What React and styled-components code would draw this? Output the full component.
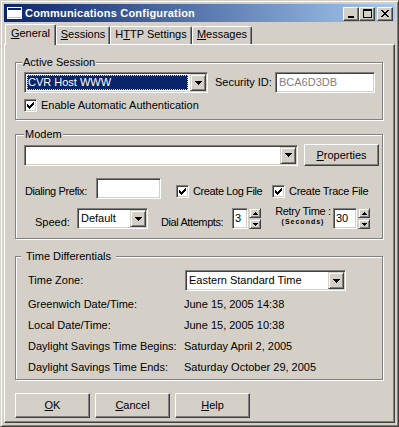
import React from "react";
import styled, { createGlobalStyle } from "styled-components";

const FACE = "#D4D0C8";

const GlobalStyle = createGlobalStyle`
  html, body {
    margin: 0;
    padding: 0;
    background: ${FACE};
  }
  body {
    font-family: "Liberation Sans", Arial, sans-serif;
    font-size: 11px;
    color: #000;
  }
  * {
    box-sizing: border-box;
  }
`;

const Window = styled.div`
  width: 399px;
  height: 427px;
  background: ${FACE};
  border: 1px solid;
  border-color: ${FACE} #404040 #404040 ${FACE};
  box-shadow: inset 1px 1px #fff, inset -1px -1px #808080;
  padding: 3px;
  display: flex;
  flex-direction: column;
`;

const TitleBar = styled.div`
  height: 18px;
  flex: none;
  display: flex;
  align-items: center;
  padding: 0 2px 0 3px;
  background: linear-gradient(to right, #0a246a, #a6caf0);
  color: #fff;
`;

const TitleText = styled.div`
  flex: 1;
  margin-left: 3px;
  font-weight: bold;
  font-size: 11px;
  letter-spacing: 0.2px;
  line-height: 13px;
  padding-top: 1px;
  white-space: nowrap;
`;

const CaptionButtons = styled.div`
  display: flex;
  align-items: center;
  margin-top: 1px;
`;

const CaptionButton = styled.div`
  width: 16px;
  height: 14px;
  margin-left: ${(p) => (p.$gap ? 2 : 0)}px;
  background: ${FACE};
  border: 1px solid;
  border-color: #fff #404040 #404040 #fff;
  box-shadow: inset -1px -1px #808080;
  display: flex;
  align-items: center;
  justify-content: center;
`;

const TabStrip = styled.div`
  height: 21px;
  flex: none;
  margin-top: 1px;
  display: flex;
  align-items: flex-end;
  padding-left: 1px;
  position: relative;
  z-index: 1;
`;

const Tab = styled.div`
  width: ${(p) => p.$w}px;
  height: ${(p) => (p.$active ? 21 : 18)}px;
  margin-bottom: ${(p) => (p.$active ? -1 : 0)}px;
  background: ${FACE};
  border-top: 1px solid #fff;
  border-left: 1px solid #fff;
  border-right: 1px solid #404040;
  border-radius: 2px 2px 0 0;
  box-shadow: inset -1px 0 #808080;
  display: flex;
  justify-content: center;
  padding-top: ${(p) => (p.$active ? 2 : 1)}px;
  line-height: 13px;
  white-space: nowrap;
`;

const Panel = styled.div`
  flex: 1;
  background: ${FACE};
  border: 1px solid;
  border-color: #fff #404040 #404040 #fff;
  box-shadow: inset -1px -1px #808080;
  padding: 17px 0 0 10px;
  display: flex;
  flex-direction: column;
`;

const Group = styled.div`
  position: relative;
  flex: none;
  width: 368px;
  height: ${(p) => p.$h}px;
  margin-top: ${(p) => p.$mt || 0}px;
  border: 1px solid #808080;
  box-shadow: inset 1px 1px #fff, 1px 1px #fff;
  padding: ${(p) => p.$pad};
`;

const Legend = styled.span`
  position: absolute;
  top: -7px;
  left: ${(p) => p.$left}px;
  padding: 0 ${(p) => p.$px}px;
  background: ${FACE};
  line-height: 13px;
  white-space: nowrap;
`;

const Row = styled.div`
  display: flex;
  align-items: ${(p) => p.$align || "center"};
  margin-top: ${(p) => p.$mt || 0}px;
`;

const Sunken = styled.div`
  flex: none;
  width: ${(p) => p.$w}px;
  height: 21px;
  margin-left: ${(p) => p.$ml || 0}px;
  background: #fff;
  border: 1px solid;
  border-color: #808080 #fff #fff #808080;
  box-shadow: inset 1px 1px #404040, inset -1px -1px ${FACE};
  padding: 1px;
  display: flex;
  align-items: center;
  color: ${(p) => (p.$dim ? "#808080" : "#000")};
  line-height: 13px;
  white-space: nowrap;
`;

const FieldText = styled.span`
  padding-left: ${(p) => p.$pl || 2}px;
`;

const ComboValue = styled.div`
  flex: 1;
  height: 15px;
  margin: 0 2px 0 1px;
  padding-left: 1px;
  line-height: 13px;
  background: ${(p) => (p.$selected ? "#0a246a" : "transparent")};
  color: ${(p) => (p.$selected ? "#fff" : "#000")};
  outline: ${(p) => (p.$selected ? "1px dotted #e8d48a" : "none")};
  outline-offset: -1px;
  padding-top: 1px;
`;

const DropButton = styled.div`
  flex: none;
  width: 16px;
  height: 17px;
  background: ${FACE};
  border: 1px solid;
  border-color: ${FACE} #404040 #404040 ${FACE};
  box-shadow: inset 1px 1px #fff, inset -1px -1px #808080;
  display: flex;
  align-items: center;
  justify-content: center;
`;

const Label = styled.span`
  flex: none;
  width: ${(p) => (p.$w ? `${p.$w}px` : "auto")};
  margin-left: ${(p) => p.$ml || 0}px;
  margin-top: ${(p) => p.$mt || 0}px;
  letter-spacing: ${(p) => p.$ls || 0}px;
  line-height: 13px;
  white-space: nowrap;
`;

const CheckLabel = styled.label`
  display: flex;
  align-items: center;
  flex: none;
  width: ${(p) => (p.$w ? `${p.$w}px` : "auto")};
  margin-left: ${(p) => p.$ml || 0}px;
  margin-top: ${(p) => p.$mt || 0}px;
  letter-spacing: ${(p) => p.$ls || 0}px;
  line-height: 13px;
  white-space: nowrap;
  gap: 4px;
`;

const CheckBox = styled.span`
  flex: none;
  width: 13px;
  height: 13px;
  background: #fff;
  border: 1px solid;
  border-color: #808080 #fff #fff #808080;
  box-shadow: inset 1px 1px #404040, inset -1px -1px ${FACE};
  padding: 2px 0 0 2px;
  display: flex;
`;

const PushButton = styled.button`
  flex: none;
  width: ${(p) => p.$w || 75}px;
  height: ${(p) => p.$h || 23}px;
  margin-left: ${(p) => p.$ml || 0}px;
  padding: 0;
  background: ${FACE};
  font: inherit;
  color: #000;
  border: 1px solid;
  border-color: #fff #404040 #404040 #fff;
  box-shadow: inset -1px -1px #808080;
  line-height: 13px;
`;

const SpinWrap = styled.div`
  display: flex;
  flex: none;
  margin-left: ${(p) => p.$ml || 0}px;
`;

const SpinButtons = styled.div`
  display: flex;
  flex-direction: column;
  margin-left: 1px;
`;

const SpinButton = styled.div`
  width: 12px;
  height: 10px;
  margin-top: ${(p) => (p.$down ? 1 : 0)}px;
  background: ${FACE};
  border: 1px solid;
  border-color: ${FACE} #404040 #404040 ${FACE};
  box-shadow: inset 1px 1px #fff, inset -1px -1px #808080;
  display: flex;
  align-items: center;
  justify-content: center;
`;

const RetryLabel = styled.div`
  flex: none;
  width: ${(p) => p.$w}px;
  margin-left: ${(p) => p.$ml}px;
  margin-top: -2px;
  display: flex;
  flex-direction: column;
  align-items: center;
  line-height: 11px;
  letter-spacing: -0.3px;
  white-space: nowrap;
`;

const SmallNote = styled.span`
  font-size: 7px;
  font-weight: bold;
  letter-spacing: 1px;
  line-height: 8px;
  margin-top: 1px;
`;

const TimeGrid = styled.div`
  display: grid;
  grid-template-columns: 156px auto;
  grid-template-rows: 24px repeat(4, 21px);
  align-items: center;
`;

const TimeCell = styled.div`
  line-height: 13px;
  white-space: nowrap;
  align-self: ${(p) => (p.$top ? "start" : "center")};
  padding-top: ${(p) => (p.$pt || 0)}px;
`;

const ButtonBar = styled.div`
  display: flex;
  margin-top: 13px;
  gap: 5px;
`;

const Arrow = () => (
  <svg width="7" height="4" viewBox="0 0 7 4" shapeRendering="crispEdges">
    <path d="M0 0h7v1H0zM1 1h5v1H1zM2 2h3v1H2zM3 3h1v1H3z" fill="#000" />
  </svg>
);

const SmallArrow = ({ up }) => (
  <svg width="5" height="3" viewBox="0 0 5 3" shapeRendering="crispEdges">
    {up ? (
      <path d="M2 0h1v1H2zM1 1h3v1H1zM0 2h5v1H0z" fill="#000" />
    ) : (
      <path d="M0 0h5v1H0zM1 1h3v1H1zM2 2h1v1H2z" fill="#000" />
    )}
  </svg>
);

const Check = () => (
  <svg width="7" height="7" viewBox="0 0 7 7" shapeRendering="crispEdges">
    <path
      d="M0 2h1v3H0zM1 3h1v3H1zM2 4h1v3H2zM3 3h1v3H3zM4 2h1v3H4zM5 1h1v3H5zM6 0h1v3H6z"
      fill="#000"
    />
  </svg>
);

const WindowIcon = () => (
  <svg width="15" height="12" viewBox="0 0 15 12" shapeRendering="crispEdges">
    <rect x="0" y="0" width="15" height="12" fill="#fff" />
    <rect x="1" y="1" width="13" height="2" fill="#0a246a" />
    <rect x="1" y="3" width="13" height="8" fill="#fff" />
    <rect x="1" y="10" width="13" height="1" fill="#c0c0c0" />
  </svg>
);

const MinIcon = () => (
  <svg width="8" height="8" viewBox="0 0 8 8" shapeRendering="crispEdges">
    <rect x="1" y="6" width="6" height="2" fill="#000" />
  </svg>
);

const MaxIcon = () => (
  <svg width="9" height="9" viewBox="0 0 9 9" shapeRendering="crispEdges">
    <path d="M0 0h9v2H0zM0 2h1v7H0zM8 2h1v7H8zM1 8h7v1H1z" fill="#000" />
  </svg>
);

const CloseIcon = () => (
  <svg width="8" height="7" viewBox="0 0 8 7" shapeRendering="crispEdges">
    <path
      d="M0 0h2v1H0zM6 0h2v1H6zM1 1h2v1H1zM5 1h2v1H5zM2 2h4v1H2zM3 3h2v1H3zM2 4h4v1H2zM1 5h2v1H1zM5 5h2v1H5zM0 6h2v1H0zM6 6h2v1H6z"
      fill="#000"
    />
  </svg>
);

const ComboBox = ({ width, value, selected, ml }) => (
  <Sunken $w={width} $ml={ml}>
    <ComboValue $selected={selected}>{value}</ComboValue>
    <DropButton>
      <Arrow />
    </DropButton>
  </Sunken>
);

const Spinner = ({ width, value, ml }) => (
  <SpinWrap $ml={ml}>
    <Sunken $w={width}>
      <FieldText $pl={1}>{value}</FieldText>
    </Sunken>
    <SpinButtons>
      <SpinButton>
        <SmallArrow up />
      </SpinButton>
      <SpinButton $down>
        <SmallArrow />
      </SpinButton>
    </SpinButtons>
  </SpinWrap>
);

const CheckItem = ({ children, ml, mt, w, ls }) => (
  <CheckLabel $ml={ml} $mt={mt} $w={w} $ls={ls}>
    <CheckBox>
      <Check />
    </CheckBox>
    {children}
  </CheckLabel>
);

const times = [
  ["Greenwich Date/Time:", "June 15, 2005 14:38"],
  ["Local Date/Time:", "June 15, 2005 10:38"],
  ["Daylight Savings Time Begins:", "Saturday April 2, 2005"],
  ["Daylight Savings Time Ends:", "Saturday October 29, 2005"],
];

export default function App() {
  return (
    <>
      <GlobalStyle />
      <Window>
        <TitleBar>
          <WindowIcon />
          <TitleText>Communications Configuration</TitleText>
          <CaptionButtons>
            <CaptionButton>
              <MinIcon />
            </CaptionButton>
            <CaptionButton>
              <MaxIcon />
            </CaptionButton>
            <CaptionButton $gap>
              <CloseIcon />
            </CaptionButton>
          </CaptionButtons>
        </TitleBar>

        <TabStrip>
          <Tab $w={51} $active>
            <span>
              <u>G</u>eneral
            </span>
          </Tab>
          <Tab $w={54}>
            <span>
              <u>S</u>essions
            </span>
          </Tab>
          <Tab $w={82}>
            <span>
              H<u>T</u>TP Settings
            </span>
          </Tab>
          <Tab $w={60}>
            <span>
              <u>M</u>essages
            </span>
          </Tab>
        </TabStrip>

        <Panel>
          <Group $h={58} $pad="9px 0 0 8px">
            <Legend $left={6} $px={1}>
              Active Session
            </Legend>
            <Row>
              <ComboBox width={184} value="CVR Host WWW" selected />
              <Label $ml={7} $w={60}>
                Security ID:
              </Label>
              <Sunken $w={100} $dim>
                <FieldText>BCA6D3DB</FieldText>
              </Sunken>
            </Row>
            <Row $mt={6}>
              <CheckItem>Enable Automatic Authentication</CheckItem>
            </Row>
          </Group>

          <Group $h={105} $mt={14} $pad="9px 0 0 8px">
            <Legend $left={8} $px={1}>
              Modem
            </Legend>
            <Row>
              <ComboBox width={274} value="" />
              <PushButton $w={75} $h={22} $ml={6}>
                <u>P</u>roperties
              </PushButton>
            </Row>
            <Row $mt={12} $align="flex-start">
              <Label $ml={1} $mt={7} $w={71} $ls={-0.4}>
                Dialing Prefix:
              </Label>
              <Sunken $w={65} />
              <CheckItem ml={15} mt={7} w={96} ls={-0.4}>
                Create Log File
              </CheckItem>
              <CheckItem mt={7} ls={-0.3}>
                Create Trace File
              </CheckItem>
            </Row>
            <Row $mt={9} $align="flex-start">
              <Label $ml={11} $mt={8} $w={42}>
                Speed:
              </Label>
              <ComboBox width={71} value="Default" />
              <Label $ml={13} $mt={8} $w={71} $ls={-0.4}>
                Dial Attempts:
              </Label>
              <Spinner width={16} value="3" />
              <RetryLabel $ml={12} $w={60}>
                <span>Retry Time :</span>
                <SmallNote>(Seconds)</SmallNote>
              </RetryLabel>
              <Spinner width={24} value="30" />
            </Row>
          </Group>

          <Group $h={124} $mt={17} $pad="13px 0 0 12px">
            <Legend $left={5} $px={5}>
              Time Differentials
            </Legend>
            <TimeGrid>
              <TimeCell $top $pt={4}>
                Time Zone:
              </TimeCell>
              <TimeCell $top>
                <ComboBox width={161} value="Eastern Standard Time" ml={1} />
              </TimeCell>
              {times.map(([k, v]) => (
                <React.Fragment key={k}>
                  <TimeCell>{k}</TimeCell>
                  <TimeCell>{v}</TimeCell>
                </React.Fragment>
              ))}
            </TimeGrid>
          </Group>

          <ButtonBar>
            <PushButton $h={25}>
              <u>O</u>K
            </PushButton>
            <PushButton $h={25}>
              <u>C</u>ancel
            </PushButton>
            <PushButton $h={25}>
              <u>H</u>elp
            </PushButton>
          </ButtonBar>
        </Panel>
      </Window>
    </>
  );
}
